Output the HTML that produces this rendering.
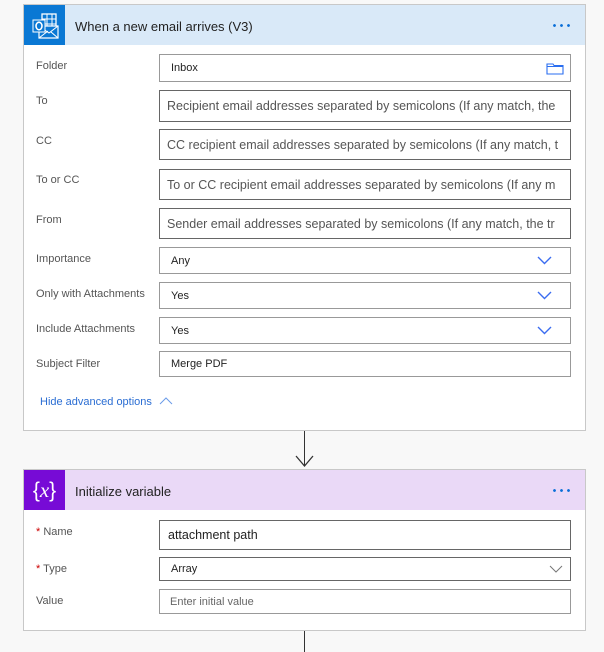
<!DOCTYPE html>
<html><head><style>
*{box-sizing:border-box;margin:0;padding:0}
body{width:604px;height:652px;background:#f8f8f8;position:relative;overflow:hidden;font-family:"Liberation Sans",sans-serif;color:#333}
.card{position:absolute;left:23px;width:563px;background:#fff;border:1px solid #c8c8c8}
.hdr{position:absolute;left:0;top:0;width:561px;height:40px}
.ic{position:absolute;left:0;top:0;width:41px;height:40px}
.title{position:absolute;left:51px;top:14px;font-size:13px;color:#222}
.dots{position:absolute;right:14px;top:19px;width:20px;height:3px;background:radial-gradient(circle,#0a6fd8 1.2px,transparent 1.6px) 0 0/7px 3px repeat-x}
.lbl{position:absolute;left:36px;font-size:11px;color:#555}
.in{position:absolute;left:159px;width:412px;border:1px solid #999;background:#fff;font-size:11px;color:#222;padding-left:11px;display:flex;align-items:center;white-space:nowrap;overflow:hidden}
.in.d{border-color:#666}
.in.ph{color:#555;font-size:12.5px;padding-left:7px}
.chev{position:absolute;right:18px;top:50%;margin-top:-6px}
.line{position:absolute;left:304px;width:1px;background:#333}
.star{color:#c00}
</style></head><body>

<div class="card" style="top:4px;height:427px">
 <div class="hdr" style="background:#d9e9f8"></div>
 <div class="ic" style="background:#0a78d4">
  <svg width="41" height="40" viewBox="0 0 41 40"><rect x="18" y="9" width="14" height="14" fill="none" stroke="#fff" stroke-width="1.3"/><path d="M18 14h14M18 19h14M23 9v14M28 9v14" stroke="#fff" stroke-width="1"/><path d="M15 21h19v12H15z" fill="#0a78d4" stroke="#fff" stroke-width="1.2"/><path d="M15 33l9-7M34 33l-7-6M15 21l10 7 9-7" fill="none" stroke="#fff" stroke-width="1"/><rect x="9" y="15" width="12" height="12" fill="#0a78d4" stroke="#fff" stroke-width="1"/><ellipse cx="15" cy="21" rx="3" ry="3.8" fill="none" stroke="#fff" stroke-width="1.6"/></svg>
 </div>
 <div class="title">When a new email arrives (V3)</div>
 <div class="dots"></div>
</div>

<div class="lbl" style="top:60px">Folder</div>
<div class="in" style="top:54px;height:28px">Inbox
 <svg class="chev" style="margin-top:-7px;right:6px" width="18" height="14" viewBox="0 0 18 14"><path d="M1 3h6l1 1.5h9v8.5H1z M1 5.5h16" fill="none" stroke="#2a6ef0" stroke-width="1.1"/></svg></div>

<div class="lbl" style="top:95px">To</div>
<div class="in d ph" style="top:90px;height:32px">Recipient email addresses separated by semicolons (If any match, the</div>
<div class="lbl" style="top:135px">CC</div>
<div class="in d ph" style="top:129px;height:31px">CC recipient email addresses separated by semicolons (If any match, t</div>
<div class="lbl" style="top:174px">To or CC</div>
<div class="in d ph" style="top:169px;height:31px">To or CC recipient email addresses separated by semicolons (If any m</div>
<div class="lbl" style="top:214px">From</div>
<div class="in d ph" style="top:208px;height:31px">Sender email addresses separated by semicolons (If any match, the tr</div>

<div class="lbl" style="top:253px">Importance</div>
<div class="in" style="top:247px;height:27px">Any<svg class="chev" width="15" height="10" viewBox="0 0 15 10"><path d="M1 2l6.5 6.5L14 2" fill="none" stroke="#3b6cf0" stroke-width="1.4"/></svg></div>
<div class="lbl" style="top:288px">Only with Attachments</div>
<div class="in" style="top:282px;height:27px">Yes<svg class="chev" width="15" height="10" viewBox="0 0 15 10"><path d="M1 2l6.5 6.5L14 2" fill="none" stroke="#3b6cf0" stroke-width="1.4"/></svg></div>
<div class="lbl" style="top:323px">Include Attachments</div>
<div class="in" style="top:317px;height:27px">Yes<svg class="chev" width="15" height="10" viewBox="0 0 15 10"><path d="M1 2l6.5 6.5L14 2" fill="none" stroke="#3b6cf0" stroke-width="1.4"/></svg></div>
<div class="lbl" style="top:358px">Subject Filter</div>
<div class="in" style="top:351px;height:26px">Merge PDF</div>

<div style="position:absolute;left:40px;top:396px;font-size:11px;color:#2a6dd3">Hide advanced options <svg width="14" height="8" viewBox="0 0 14 8" style="margin-left:4px"><path d="M1 7l6-6 6 6" fill="none" stroke="#6b9be8" stroke-width="1"/></svg></div>

<div class="line" style="top:431px;height:35px"></div>
<svg style="position:absolute;left:295px;top:455px" width="19" height="12" viewBox="0 0 19 12"><path d="M1 1l8.5 10L18 1" fill="none" stroke="#333" stroke-width="1.3"/></svg>

<div class="card" style="top:469px;height:162px">
 <div class="hdr" style="background:#ead9f7"></div>
 <div class="ic" style="background:#770bd6;color:#fff;font-family:'Liberation Serif',serif;font-size:21px;text-align:center;line-height:40px"><span style="font-family:'Liberation Sans'">{</span><i>x</i><span style="font-family:'Liberation Sans'">}</span></div>
 <div class="title">Initialize variable</div>
 <div class="dots"></div>
</div>

<div class="lbl" style="top:526px"><span class="star">*</span> Name</div>
<div class="in d" style="top:520px;height:30px;font-size:12.5px;padding-left:8px">attachment path</div>
<div class="lbl" style="top:563px"><span class="star">*</span> Type</div>
<div class="in d" style="top:557px;height:24px">Array<svg class="chev" style="right:7px;margin-top:-4px" width="14" height="8" viewBox="0 0 14 8"><path d="M1 1l6 6 6-6" fill="none" stroke="#777" stroke-width="1"/></svg></div>
<div class="lbl" style="top:595px">Value</div>
<div class="in" style="top:589px;height:25px;color:#666;padding-left:10px">Enter initial value</div>

<div class="line" style="top:631px;height:21px"></div>
</body></html>
